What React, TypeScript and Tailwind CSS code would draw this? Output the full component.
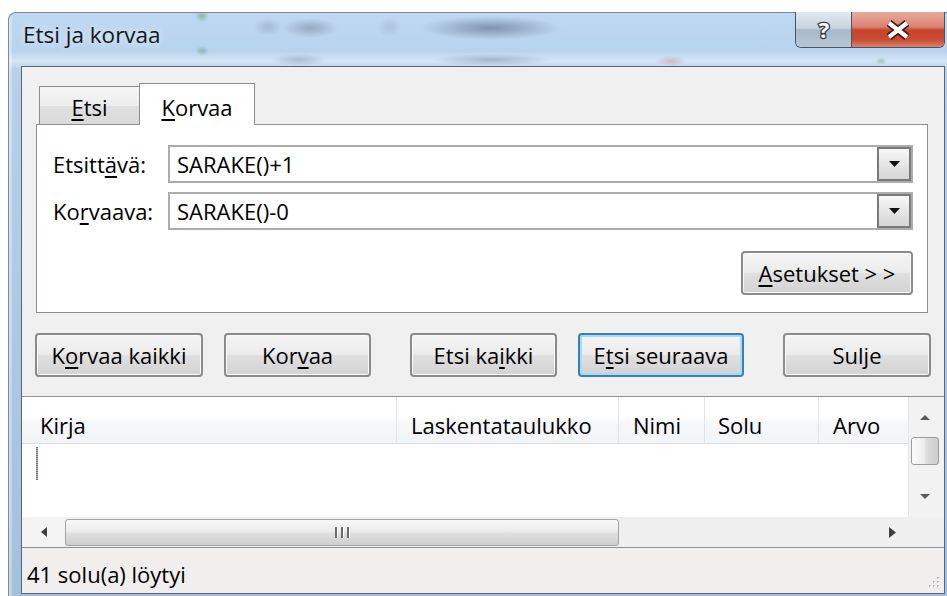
import React from "react";

function U({ children }: { children: React.ReactNode }) {
  return <span className="underline decoration-[1.5px] underline-offset-[3px]">{children}</span>;
}

const btnBase =
  "h-[44px] shrink-0 rounded-[4px] border-2 flex items-center justify-center text-[22px] leading-none text-black bg-[linear-gradient(#f4f4f4,#ececec_48%,#dfdfdf_52%,#d3d3d3)]";
const btnIdle = "border-[#8b8b8b] shadow-[inset_0_0_0_1px_#fafafa]";
const btnFocus = "border-[#3c7fb1] shadow-[inset_0_0_0_2px_#a8dcf6]";

function Combo({ label, value }: { label: React.ReactNode; value: string }) {
  return (
    <div className="flex items-center h-[38px]">
      <div className="w-[115px] text-[22px] leading-none">{label}</div>
      <div className="flex-1 h-full border-2 border-[#acacac] bg-white flex items-stretch">
        <div className="flex-1 flex items-center pl-[7px] text-[22px] leading-none">{value}</div>
        <div className="w-[34px] border-2 border-[#7a7a7a] bg-[linear-gradient(#f7f7f7,#e6e6e6_50%,#d6d6d6)] flex items-center justify-center">
          <svg width="11" height="6" viewBox="0 0 11 6">
            <path d="M0 0h11L5.5 6z" fill="#111" />
          </svg>
        </div>
      </div>
    </div>
  );
}

function HeaderCell({ children, className }: { children: React.ReactNode; className: string }) {
  return (
    <div className={`h-full flex items-center pt-[10px] text-[22px] leading-none ${className}`}>
      {children}
    </div>
  );
}

export default function App() {
  return (
    <div className="w-[947px] h-[596px] bg-white overflow-hidden font-['Open_Sans',sans-serif] text-black">
      {/* window frame with glass */}
      <div className="ml-[8px] mt-[12px] w-[939px] h-[584px] rounded-tl-[8px] border-l border-t border-[#7b8999] pl-[12px] pr-[2px] pb-[2px] flex flex-col bg-[image:linear-gradient(90deg,rgba(255,255,255,0.55)_0px,rgba(255,255,255,0)_4px),radial-gradient(ellipse_70px_12px_at_482px_15px,rgba(95,112,135,0.65),transparent),radial-gradient(ellipse_60px_6px_at_482px_47px,rgba(95,112,135,0.4),transparent),radial-gradient(ellipse_28px_10px_at_301px_15px,rgba(110,125,145,0.5),transparent),radial-gradient(ellipse_28px_6px_at_290px_47px,rgba(110,125,145,0.4),transparent),radial-gradient(ellipse_14px_9px_at_259px_14px,rgba(120,135,150,0.35),transparent),radial-gradient(ellipse_12px_10px_at_380px_14px,rgba(120,135,150,0.25),transparent),radial-gradient(ellipse_7px_6px_at_193px_3px,rgba(90,150,90,0.5),transparent),radial-gradient(ellipse_7px_5px_at_193px_38px,rgba(90,150,90,0.45),transparent),radial-gradient(ellipse_16px_5px_at_662px_48px,rgba(200,100,120,0.35),transparent),radial-gradient(ellipse_6px_4px_at_872px_48px,rgba(90,150,90,0.4),transparent),linear-gradient(180deg,#bfd8f1_0px,#b8d3ef_38px,#d6e6f5_48px,#b8d0ea_56px,#a4c0de_100%)]">
        {/* title bar */}
        <div className="h-[53px] shrink-0 flex justify-between items-start">
          <div className="pl-[2px] pt-[11px] text-[22.5px] leading-none text-[#101820] [text-shadow:0_0_8px_rgba(255,255,255,0.9)]">
            Etsi ja korvaa
          </div>
          <div className="flex -mt-px h-[36px] border-x border-b border-[#4a5563] rounded-b-[6px] overflow-hidden">
            <div className="w-[56px] h-full border-r border-[#4a5563] bg-[linear-gradient(#e2e9f0,#c9d4df_45%,#a9b8c8_52%,#b9c6d4)] flex items-center justify-center">
              <svg width="24" height="30" viewBox="0 0 24 30" className="overflow-visible">
                <text
                  x="12"
                  y="23"
                  textAnchor="middle"
                  fontSize="22"
                  fontWeight="700"
                  fontFamily="'Open Sans', sans-serif"
                  fill="#fff"
                  stroke="#2f3b49"
                  strokeWidth="2.6"
                  paintOrder="stroke"
                >
                  ?
                </text>
              </svg>
            </div>
            <div className="w-[92px] h-full bg-[linear-gradient(#e9ab9d,#d98372_42%,#c7442f_52%,#c84a33_78%,#d9846a)] flex items-center justify-center">
              <svg width="28" height="22" viewBox="0 0 28 22">
                <path d="M5 4L23 18M23 4L5 18" stroke="#3a1712" strokeWidth="7.5" />
                <path d="M5 4L23 18M23 4L5 18" stroke="#ffffff" strokeWidth="4.2" />
              </svg>
            </div>
          </div>
        </div>

        {/* client area */}
        <div className="h-[528px] shrink-0 border border-[#5b6672] bg-[#f0f0f0] flex flex-col">
          {/* tabs */}
          <div className="mt-[16px] ml-[14px] mr-[16px] h-[41px] flex items-end pl-[3px]">
            <div className="w-[101px] h-[38px] border-l border-t border-r border-[#8c8e94] bg-[linear-gradient(#f5f5f5,#ededed_50%,#e0e0e0_52%,#dadada)] flex items-center justify-center text-[22px] leading-none pt-[2px]">
              <U>E</U>tsi
            </div>
            <div className="relative z-10 -ml-px -mb-px w-[116px] h-[42px] border-l border-t border-r border-[#8c8e94] bg-white flex items-center justify-center text-[22px] leading-none pt-[4px]">
              <U>K</U>orvaa
            </div>
          </div>

          {/* tab page */}
          <div className="ml-[14px] mr-[16px] h-[189px] border border-[#8c8e94] bg-white pt-[20px] pl-[16px] pr-[14px] flex flex-col">
            <div className="flex flex-col gap-[9px]">
              <Combo
                label={
                  <>
                    Etsitt<U>ä</U>vä:
                  </>
                }
                value="SARAKE()+1"
              />
              <Combo
                label={
                  <>
                    Ko<U>r</U>vaava:
                  </>
                }
                value="SARAKE()-0"
              />
            </div>
            <div className={`${btnBase} ${btnIdle} self-end mt-[21px] w-[172px] h-[43px]`}>
              <U>A</U>setukset &gt; &gt;
            </div>
          </div>

          {/* command buttons */}
          <div className="mt-[20px] ml-[13px] flex">
            <div className={`${btnBase} ${btnIdle} w-[168px]`}>
              K<U>o</U>rvaa kaikki
            </div>
            <div className={`${btnBase} ${btnIdle} ml-[21px] w-[147px]`}>
              Kor<U>v</U>aa
            </div>
            <div className={`${btnBase} ${btnIdle} ml-[39px] w-[147px]`}>
              Etsi ka<U>i</U>kki
            </div>
            <div className={`${btnBase} ${btnFocus} ml-[21px] w-[166px]`}>
              E<U>t</U>si seuraava
            </div>
            <div className={`${btnBase} ${btnIdle} ml-[39px] w-[148px]`}>Sulje</div>
          </div>

          {/* results list */}
          <div className="mt-[19px] h-[152px] shrink-0 border-t border-b border-[#8f9399] bg-white flex">
            <div className="flex-1 flex flex-col min-w-0">
              <div className="h-[47px] shrink-0 flex border-b border-[#dcdde0] bg-[linear-gradient(#ffffff,#ffffff_45%,#f6f7f9_55%,#f3f4f6)]">
                <HeaderCell className="w-[375px] pl-[18px] border-r border-[#e2e3e5]">Kirja</HeaderCell>
                <HeaderCell className="w-[222px] pl-[14px] border-r border-[#e2e3e5]">Laskentataulukko</HeaderCell>
                <HeaderCell className="w-[86px] pl-[14px] border-r border-[#e2e3e5]">Nimi</HeaderCell>
                <HeaderCell className="w-[114px] pl-[13px] border-r border-[#e2e3e5]">Solu</HeaderCell>
                <HeaderCell className="flex-1 pl-[14px]">Arvo</HeaderCell>
              </div>
              <div className="flex-1 bg-white">
                <div className="ml-[14px] mt-[3px] w-[2px] h-[33px] bg-[repeating-linear-gradient(180deg,#4f7fcf_0px,#4f7fcf_1px,#e3a056_1px,#e3a056_2px)]" />
              </div>
              {/* horizontal scrollbar */}
              <div className="h-[30px] shrink-0 flex bg-[#efefef]">
                <div className="w-[43px] flex items-center justify-center bg-[#f4f4f4]">
                  <svg width="6" height="10" viewBox="0 0 6 10">
                    <path d="M6 0v10L0 5z" fill="#3f3f3f" />
                  </svg>
                </div>
                <div className="w-[554px] mt-[2px] mb-[1px] rounded-[3px] border border-[#a3a3a3] bg-[linear-gradient(#f8f8f8,#ececec_45%,#dedede_55%,#cfcfcf)] flex items-center justify-center">
                  <svg width="15" height="11" viewBox="0 0 15 11">
                    <rect x="0" y="0" width="2" height="11" fill="#6b6b6b" />
                    <rect x="6" y="0" width="2" height="11" fill="#6b6b6b" />
                    <rect x="12" y="0" width="2" height="11" fill="#6b6b6b" />
                    <rect x="2" y="0" width="1" height="11" fill="#ffffff" />
                    <rect x="8" y="0" width="1" height="11" fill="#ffffff" />
                    <rect x="14" y="0" width="1" height="11" fill="#ffffff" />
                  </svg>
                </div>
                <div className="flex-1 flex items-center justify-end pr-[12px]">
                  <svg width="7" height="11" viewBox="0 0 7 11">
                    <path d="M0 0v11L7 5.5z" fill="#3f3f3f" />
                  </svg>
                </div>
              </div>
            </div>
            {/* vertical scrollbar + corner */}
            <div className="w-[36px] shrink-0 flex flex-col">
              <div className="flex-1 flex flex-col bg-[#f2f2f2] border-l border-[#e6e6e6] pr-[3px]">
                <div className="h-[40px] flex items-center justify-center pt-[1px]">
                  <svg width="10" height="5" viewBox="0 0 10 5">
                    <path d="M0 5h10L5 0z" fill="#5a5a5a" />
                  </svg>
                </div>
                <div className="h-[28px] mx-[2px] rounded-[3px] border border-[#9c9c9c] bg-[linear-gradient(90deg,#fbfbfb,#eeeeee_45%,#dcdcdc_55%,#cdcdcd)]" />
                <div className="flex-1" />
                <div className="h-[40px] flex items-center justify-center pb-[2px]">
                  <svg width="10" height="5" viewBox="0 0 10 5">
                    <path d="M0 0h10L5 5z" fill="#5a5a5a" />
                  </svg>
                </div>
              </div>
              <div className="h-[30px] shrink-0 bg-[#efefef]" />
            </div>
          </div>

          {/* status bar */}
          <div className="flex-1 bg-[#f1eeee] flex justify-between">
            <div className="pl-[5px] pt-[6px] flex items-center text-[22px] leading-none">41 solu(a) löytyi</div>
            <svg className="self-end mb-[3px] mr-[3px]" width="14" height="14" viewBox="0 0 14 14">
              <rect x="10" y="1" width="2" height="2" fill="#b8b8b8" />
              <rect x="6" y="5" width="2" height="2" fill="#b8b8b8" />
              <rect x="10" y="5" width="2" height="2" fill="#b8b8b8" />
              <rect x="2" y="9" width="2" height="2" fill="#b8b8b8" />
              <rect x="6" y="9" width="2" height="2" fill="#b8b8b8" />
              <rect x="10" y="9" width="2" height="2" fill="#b8b8b8" />
              <rect x="11" y="2" width="2" height="2" fill="#ffffff" />
              <rect x="7" y="6" width="2" height="2" fill="#ffffff" />
              <rect x="11" y="6" width="2" height="2" fill="#ffffff" />
              <rect x="3" y="10" width="2" height="2" fill="#ffffff" />
              <rect x="7" y="10" width="2" height="2" fill="#ffffff" />
              <rect x="11" y="10" width="2" height="2" fill="#ffffff" />
            </svg>
          </div>
        </div>
      </div>
    </div>
  );
}
